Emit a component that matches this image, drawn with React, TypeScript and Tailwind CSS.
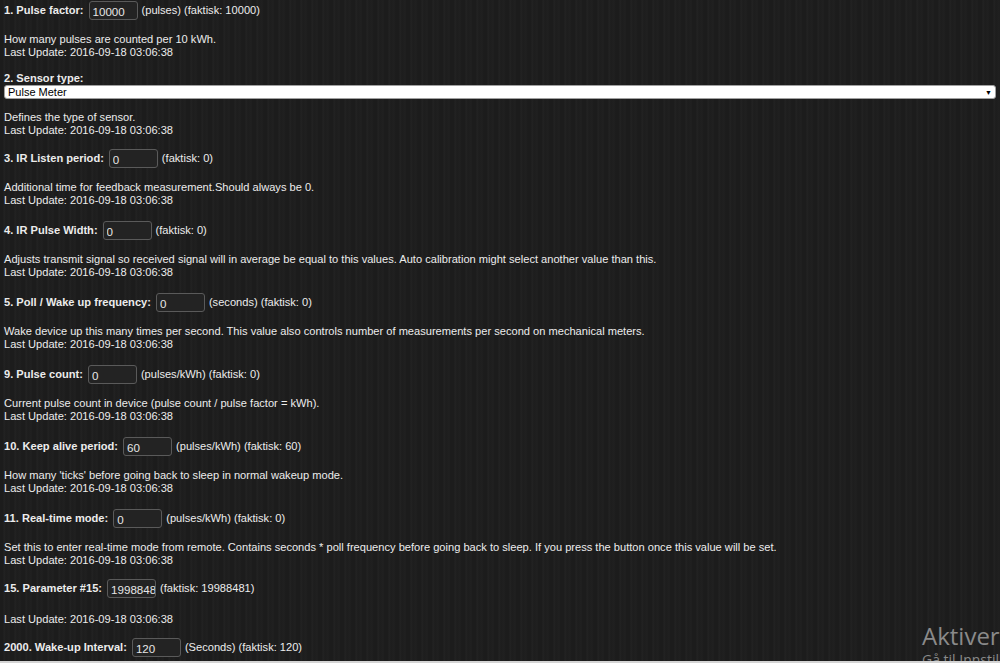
type Param = {
  label: string;
  value: string;
  suffix: string;
  desc: string;
  gapTop?: string;
  gapBottom?: string;
};

const params: Param[] = [
  { label: "3. IR Listen period:", value: "0", suffix: "(faktisk: 0)", desc: "Additional time for feedback measurement.Should always be 0." },
  { label: "4. IR Pulse Width:", value: "0", suffix: "(faktisk: 0)", desc: "Adjusts transmit signal so received signal will in average be equal to this values. Auto calibration might select another value than this." },
  { label: "5. Poll / Wake up frequency:", value: "0", suffix: "(seconds) (faktisk: 0)", desc: "Wake device up this many times per second. This value also controls number of measurements per second on mechanical meters." },
  { label: "9. Pulse count:", value: "0", suffix: "(pulses/kWh) (faktisk: 0)", desc: "Current pulse count in device (pulse count / pulse factor = kWh)." },
  { label: "10. Keep alive period:", value: "60", suffix: "(pulses/kWh) (faktisk: 60)", desc: "How many 'ticks' before going back to sleep in normal wakeup mode." },
  { label: "11. Real-time mode:", value: "0", suffix: "(pulses/kWh) (faktisk: 0)", desc: "Set this to enter real-time mode from remote. Contains seconds * poll frequency before going back to sleep. If you press the button once this value will be set.", gapBottom: "mb-[11px]" },
  { label: "15. Parameter #15:", value: "1998848", suffix: "(faktisk: 19988481)", desc: "", gapTop: "mt-[15px]", gapBottom: "mb-[11px]" },
];

const LAST = "Last Update: 2016-09-18 03:06:38";

function Row({ label, value, suffix }: { label: string; value: string; suffix: string }) {
  return (
    <div className="flex h-[20px] items-center gap-[4px] whitespace-nowrap">
      <span className="font-bold">{label}</span>
      <input
        defaultValue={value}
        className="ml-[1px] h-[19px] w-[49px] rounded-[3px] border border-[#5a5a5a] bg-[#232323] pl-[3px] pr-0 pt-[2px] text-[11.6px] leading-[14px] text-[#e6e6e6] outline-none"
      />
      <span>{suffix}</span>
    </div>
  );
}

export default function App() {
  return (
    <div
      className="relative h-[663px] w-[1000px] overflow-hidden bg-[#1e1e1e] bg-[repeating-linear-gradient(90deg,#1c1c1c_0px,#1c1c1c_3px,#232323_4px,#1d1d1d_6px,#202020_9px,#1b1b1b_11px)] text-[11.1px] leading-[13px] text-[#ececec]"
      style={{ fontFamily: '"Liberation Sans", Arial, sans-serif' }}
    >
      <div className="px-[4px]">
        {/* 1 */}
        <div className="mb-[13px]">
          <Row label="1. Pulse factor:" value="10000" suffix="(pulses) (faktisk: 10000)" />
          <p className="mt-[13px]">
            How many pulses are counted per 10 kWh.
            <br />
            {LAST}
          </p>
        </div>

        {/* 2 */}
        <div className="mb-[11px]">
          <div className="font-bold">2. Sensor type:</div>
          <div className="flex h-[14px] items-center justify-between rounded-[3px] border border-[#a0a0a0] bg-white px-[3px] text-[11px] text-black">
            <span>Pulse Meter</span>
            <span className="text-[7px]">▼</span>
          </div>
          <p className="mt-[12px]">
            Defines the type of sensor.
            <br />
            {LAST}
          </p>
        </div>

        {params.map((p) => (
          <div key={p.label} className={p.gapBottom ?? "mb-[13px]"}>
            <Row label={p.label} value={p.value} suffix={p.suffix} />
            <p className={p.gapTop ?? "mt-[13px]"}>
              {p.desc && (
                <>
                  {p.desc}
                  <br />
                </>
              )}
              {LAST}
            </p>
          </div>
        ))}

        <Row label="2000. Wake-up Interval:" value="120" suffix="(Seconds) (faktisk: 120)" />
      </div>

      {/* windows watermark */}
      <div
        className="pointer-events-none absolute left-[922px] top-[620px] whitespace-nowrap text-[#8a8a8a]"
        style={{ fontFamily: '"Open Sans", "Noto Sans", sans-serif' }}
      >
        <div className="text-[24px] leading-[32px]">Aktiver Windows</div>
        <div className="text-[14px] leading-[16px]">Gå til Innstillinger</div>
      </div>

      <div className="absolute bottom-0 left-0 h-[2px] w-full bg-[#d4d4d4]" />
    </div>
  );
}
